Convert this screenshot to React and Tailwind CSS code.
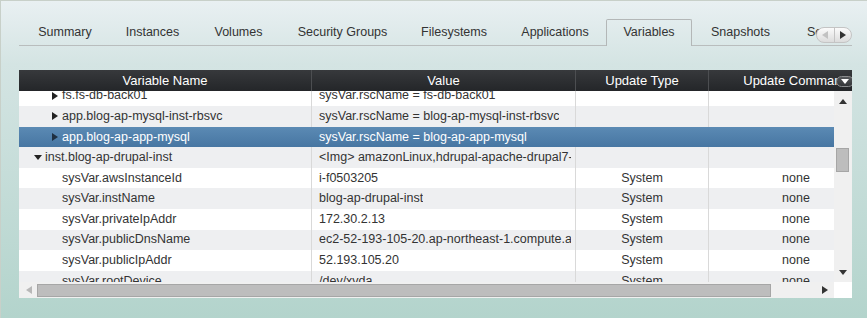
import React from "react";

const tabs = [
  { label: "Summary", w: "w-[88px]" },
  { label: "Instances", w: "w-[87px]" },
  { label: "Volumes", w: "w-[85px]" },
  { label: "Security Groups", w: "w-[123px]" },
  { label: "Filesystems", w: "w-[100px]" },
  { label: "Applications", w: "w-[102px]" },
  { label: "Variables", w: "w-[86px]", active: true },
  { label: "Snapshots", w: "w-[97px]" },
];

const rows = [
  { kind: "closed", name: "fs.fs-db-back01", value: "sysVar.rscName = fs-db-back01" },
  { kind: "closed", name: "app.blog-ap-mysql-inst-rbsvc", value: "sysVar.rscName = blog-ap-mysql-inst-rbsvc" },
  { kind: "closed", name: "app.blog-ap-app-mysql", value: "sysVar.rscName = blog-ap-app-mysql", selected: true },
  { kind: "open", name: "inst.blog-ap-drupal-inst", value: "<Img> amazonLinux,hdrupal-apache-drupal7-blog" },
  { kind: "leaf", name: "sysVar.awsInstanceId", value: "i-f0503205", type: "System", cmd: "none" },
  { kind: "leaf", name: "sysVar.instName", value: "blog-ap-drupal-inst", type: "System", cmd: "none" },
  { kind: "leaf", name: "sysVar.privateIpAddr", value: "172.30.2.13", type: "System", cmd: "none" },
  { kind: "leaf", name: "sysVar.publicDnsName", value: "ec2-52-193-105-20.ap-northeast-1.compute.amazonaws.com", type: "System", cmd: "none" },
  { kind: "leaf", name: "sysVar.publicIpAddr", value: "52.193.105.20", type: "System", cmd: "none" },
  { kind: "leaf", name: "sysVar.rootDevice", value: "/dev/xvda", type: "System", cmd: "none" },
];

function Arrow({ dir, color }) {
  const pts = {
    right: "0,0 6,4 0,8",
    left: "6,0 0,4 6,8",
    down: "0,0 8,0 4,5",
    up: "4,0 8,5 0,5",
  }[dir];
  const size = dir === "right" || dir === "left" ? [6, 8] : [8, 5];
  return (
    <svg width={size[0]} height={size[1]} viewBox={`0 0 ${size[0]} ${size[1]}`} className="shrink-0">
      <polygon points={pts} fill={color} />
    </svg>
  );
}

function Row({ r, i }) {
  const stripe = r.selected
    ? "bg-linear-to-b from-[#5b8ab4] to-[#4776a2] text-white"
    : i % 2 === 0
    ? "bg-white"
    : "bg-[#eeeff1]";
  const line = r.selected ? "" : "border-r border-[#d9d9d9]";
  return (
    <div className={`flex h-[20.6px] ${stripe}`}>
      <div className={`w-[293px] shrink-0 flex items-center whitespace-nowrap overflow-hidden ${line} ${r.kind === "open" ? "pl-[15px]" : r.kind === "closed" ? "pl-[33px]" : "pl-[43px]"}`}>
        {r.kind === "closed" && (
          <span className="mr-[4px] flex">
            <Arrow dir="right" color={r.selected ? "#1f2f40" : "#222"} />
          </span>
        )}
        {r.kind === "open" && (
          <span className="mr-[3px] flex">
            <Arrow dir="down" color="#222" />
          </span>
        )}
        {r.name}
      </div>
      <div className={`w-[264px] shrink-0 flex items-center pl-[7px] pr-[4px] whitespace-nowrap overflow-hidden ${line}`}>
        <span className="overflow-hidden">{r.value}</span>
      </div>
      <div className={`w-[133px] shrink-0 flex items-center justify-center ${line}`}>{r.type}</div>
      <div className="w-[174px] shrink-0 flex items-center justify-center">{r.cmd}</div>
    </div>
  );
}

export default function App() {
  return (
    <div className="w-[867px] h-[318px] overflow-hidden border-t border-l border-[#c8d0c9] bg-linear-to-b from-[#e9f0f2] via-[#d4e4e3] via-20% to-[#b3d4cc] font-['Liberation_Sans',Arial,sans-serif] text-[12.5px] text-[#333]">
      <div className="pl-[18px] pt-[18px]">
        <div className="relative flex w-[833px] h-[27px] overflow-hidden">
          <div className="w-[2px] shrink-0 border-b border-[#b9bdbd]" />
          {tabs.map((t) =>
            t.active ? (
              <div
                key={t.label}
                className={`${t.w} shrink-0 flex items-center justify-center pb-[1px] border border-b-0 border-[#b3b7b7] rounded-t-[2px]`}
              >
                {t.label}
              </div>
            ) : (
              <div
                key={t.label}
                className={`${t.w} shrink-0 flex items-center justify-center border-b border-[#b9bdbd]`}
              >
                {t.label}
              </div>
            )
          )}
          <div className="flex-1 border-b border-[#b9bdbd] pl-[18px] flex items-center whitespace-nowrap">
            Scripts
          </div>
          <div className="absolute right-0 top-[8px] flex h-[16px] w-[36px] rounded-full border border-[#c4c4c4] bg-linear-to-b from-[#fbfbfb] to-[#dcdcdc] overflow-hidden">
            <div className="flex-1 flex items-center justify-center border-r border-[#c4c4c4]">
              <Arrow dir="left" color="#c2c2c2" />
            </div>
            <div className="flex-1 flex items-center justify-center">
              <Arrow dir="right" color="#333" />
            </div>
          </div>
        </div>
      </div>

      <div className="ml-[18px] mt-[24px] w-[833px] h-[228px] bg-white flex flex-col overflow-hidden">
        <div className="relative flex h-[21px] shrink-0 bg-linear-to-b from-[#37393c] to-[#242629] text-white text-[13px]">
          <div className="w-[293px] shrink-0 flex items-center justify-center border-r border-[#4c4e51]">Variable Name</div>
          <div className="w-[264px] shrink-0 flex items-center justify-center border-r border-[#4c4e51]">Value</div>
          <div className="w-[133px] shrink-0 flex items-center justify-center border-r border-[#4c4e51]">Update Type</div>
          <div className="w-[174px] shrink-0 flex items-center justify-center whitespace-nowrap">Update Command</div>
          <div className="absolute left-[817px] top-[6px] w-[18px] h-[11px] rounded-full border border-[#8a8c8e] bg-linear-to-b from-[#55575a] to-[#333538] flex items-center pl-[4px]">
            <Arrow dir="down" color="#fff" />
          </div>
        </div>

        <div className="flex h-[191px] shrink-0">
          <div className="w-[815px] shrink-0 overflow-hidden">
            <div className="-mt-[5.6px]">
              {rows.map((r, i) => (
                <Row key={r.name} r={r} i={i} />
              ))}
            </div>
          </div>
          <div className="relative w-[18px] shrink-0 bg-[#f0f0f0]">
            <div className="absolute left-[5px] top-[8px]">
              <Arrow dir="up" color="#333" />
            </div>
            <div className="absolute left-[2px] top-[57px] w-[13px] h-[24px] bg-[#bdbdbd] border border-[#a6a6a6]" />
            <div className="absolute left-[5px] top-[179px]">
              <Arrow dir="down" color="#333" />
            </div>
          </div>
        </div>

        <div className="flex h-[16px] shrink-0">
          <div className="relative w-[815px] shrink-0 bg-[#f0f0f0]">
            <div className="absolute left-[7px] top-[4px]">
              <Arrow dir="left" color="#b8b8b8" />
            </div>
            <div className="absolute left-[18px] top-[2px] w-[734px] h-[13px] bg-[#bdbdbd] border border-[#a6a6a6]" />
            <div className="absolute left-[803px] top-[4px]">
              <Arrow dir="right" color="#333" />
            </div>
          </div>
          <div className="flex-1 bg-white" />
        </div>
      </div>
    </div>
  );
}
